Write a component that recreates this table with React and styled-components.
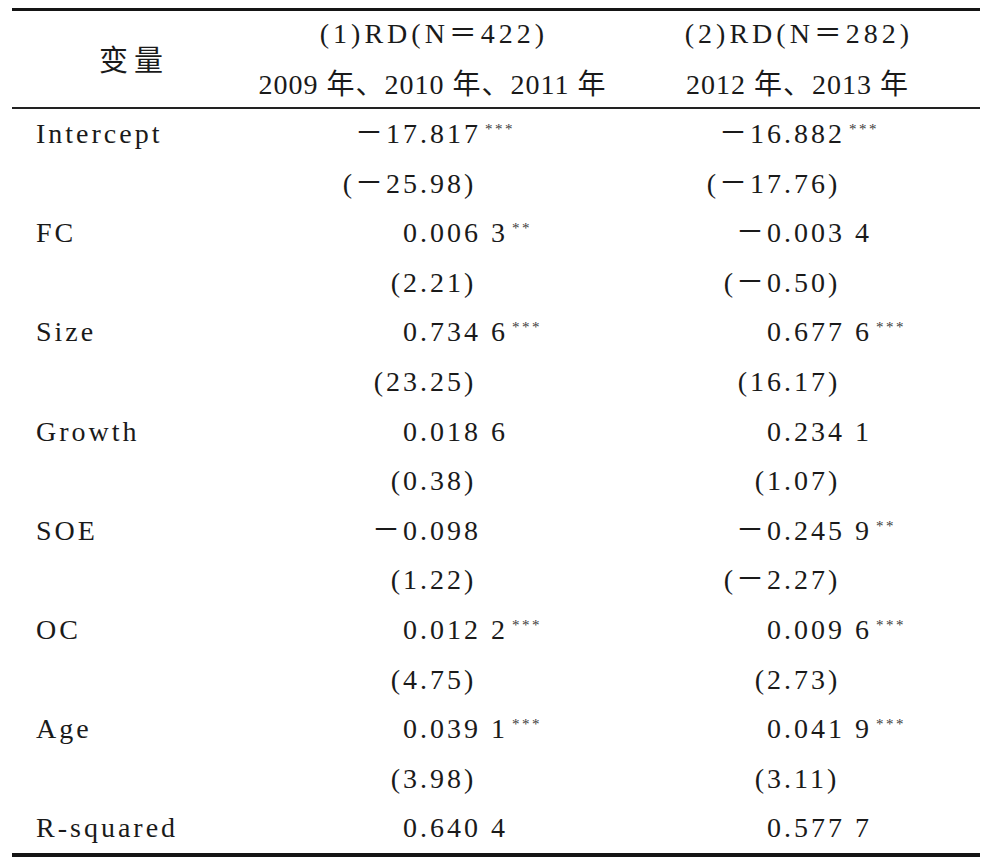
import React from "react";
import styled, { createGlobalStyle } from "styled-components";

const SERIF = `"Liberation Serif", "Noto Sans CJK SC", serif`;

const Global = createGlobalStyle`
  html, body { margin: 0; padding: 0; background: #ffffff; }
  body {
    font-family: ${SERIF};
    color: #1a1a1a;
  }
`;

const Page = styled.div`
  padding: 8px 12px 0 12px;
  font-family: ${SERIF};
`;

const Table = styled.div`
  width: 968px;
  border-top: 3px solid #151515;
  border-bottom: 4px solid #151515;
`;

const Head = styled.div`
  display: grid;
  grid-template-columns: 238px 364px 366px;
  height: 96px;
  border-bottom: 2px solid #222222;
`;

const VarHead = styled.div`
  display: flex;
  align-items: center;
  justify-content: center;
  padding-left: 6px;
  padding-bottom: 2px;
  font-family: "Noto Sans CJK SC", sans-serif;
  font-size: 29px;
  letter-spacing: 6px;
`;

const ColHead = styled.div`
  display: flex;
  flex-direction: column;
  align-items: center;
`;

const HeadLine = styled.div`
  height: ${(p) => p.$h}px;
  line-height: ${(p) => p.$h}px;
  font-size: 28px;
  white-space: nowrap;
  letter-spacing: ${(p) => p.$spacing}px;
  padding-left: ${(p) => p.$spacing}px;
  padding-top: ${(p) => p.$top}px;
`;

const Body = styled.div`
  display: flex;
  flex-direction: column;
`;

const Row = styled.div`
  display: grid;
  grid-template-columns: 238px 364px 366px;
  height: 49.6px;
  line-height: 49.6px;
  font-size: 28px;
  letter-spacing: 3px;
  white-space: nowrap;
`;

const Label = styled.div`
  padding-left: 24px;
`;

const Value = styled.div`
  display: flex;
  align-items: baseline;
`;

const IntPart = styled.span`
  width: 170px;
  text-align: right;
`;

const FracPart = styled.span``;

const Stars = styled.span`
  font-size: 15px;
  letter-spacing: 2.5px;
  vertical-align: 9px;
  line-height: 1;
  margin-left: 4px;
  color: #3a3a3a;
`;

function Num({ v, s }) {
  if (!v) return <Value />;
  const i = v.indexOf(".");
  return (
    <Value>
      <IntPart>{v.slice(0, i)}</IntPart>
      <FracPart>
        {v.slice(i)}
        {s ? <Stars>{s}</Stars> : null}
      </FracPart>
    </Value>
  );
}

const rows = [
  ["Intercept", "－17.817", "***", "－16.882", "***"],
  ["", "(－25.98)", "", "(－17.76)", ""],
  ["FC", "0.006 3", "**", "－0.003 4", ""],
  ["", "(2.21)", "", "(－0.50)", ""],
  ["Size", "0.734 6", "***", "0.677 6", "***"],
  ["", "(23.25)", "", "(16.17)", ""],
  ["Growth", "0.018 6", "", "0.234 1", ""],
  ["", "(0.38)", "", "(1.07)", ""],
  ["SOE", "－0.098", "", "－0.245 9", "**"],
  ["", "(1.22)", "", "(－2.27)", ""],
  ["OC", "0.012 2", "***", "0.009 6", "***"],
  ["", "(4.75)", "", "(2.73)", ""],
  ["Age", "0.039 1", "***", "0.041 9", "***"],
  ["", "(3.98)", "", "(3.11)", ""],
  ["R-squared", "0.640 4", "", "0.577 7", ""],
];

export default function App() {
  return (
    <>
      <Global />
      <Page>
        <Table>
          <Head>
            <VarHead>变量</VarHead>
            <ColHead>
              <HeadLine $h={45} $top={0} $spacing={4}>(1)RD(N＝422)</HeadLine>
              <HeadLine $h={45} $top={6} $spacing={1}>2009 年、2010 年、2011 年</HeadLine>
            </ColHead>
            <ColHead>
              <HeadLine $h={45} $top={0} $spacing={4}>(2)RD(N＝282)</HeadLine>
              <HeadLine $h={45} $top={6} $spacing={1}>2012 年、2013 年</HeadLine>
            </ColHead>
          </Head>
          <Body>
            {rows.map((r, k) => (
              <Row key={k}>
                <Label>{r[0]}</Label>
                <Num v={r[1]} s={r[2]} />
                <Num v={r[3]} s={r[4]} />
              </Row>
            ))}
          </Body>
        </Table>
      </Page>
    </>
  );
}
